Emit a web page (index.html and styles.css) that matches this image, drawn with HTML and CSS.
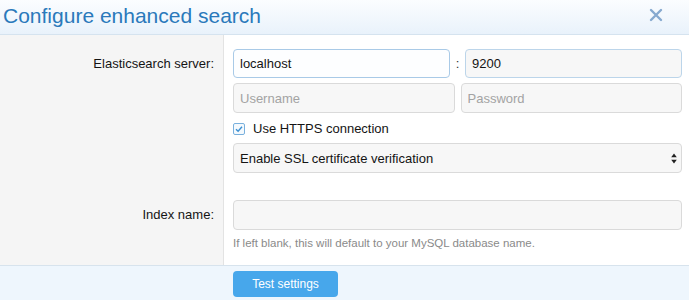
FILE: index.html
```html
<!DOCTYPE html>
<html>
<head>
<meta charset="utf-8">
<link rel="stylesheet" href="styles.css">
</head>
<body>
<div class="overlay">
  <div class="header">
    <h1 class="title">Configure enhanced search</h1>
    <span class="close">
      <svg width="14" height="14" viewBox="0 0 14 14"><path d="M2 2 L12 12 M12 2 L2 12" stroke="#86a9cf" stroke-width="2.4" stroke-linecap="round"/></svg>
    </span>
  </div>
  <div class="form">
    <div class="row row-server">
      <div class="label">Elasticsearch server:</div>
      <div class="ctrl">
        <div class="pair host">
          <input class="input focus" type="text" value="localhost">
          <span class="colon">:</span>
          <input class="input port" type="text" value="9200">
        </div>
        <div class="pair creds">
          <input class="input" type="text" placeholder="Username">
          <input class="input" type="password" placeholder="Password">
        </div>
        <label class="check">
          <span class="box"><svg width="12" height="12" viewBox="0 0 12 12"><rect x="0.5" y="0.5" width="11" height="11" rx="1.5" fill="#f4f9fd" stroke="#79b0dd"/><path d="M3 6.2 L5.1 8.2 L9 3.8" fill="none" stroke="#3b8fd2" stroke-width="1.4"/></svg></span>
          <span>Use HTTPS connection</span>
        </label>
        <div class="select">
          <span>Enable SSL certificate verification</span>
          <svg class="arrows" width="6" height="11" viewBox="0 0 6 11"><path d="M3 0.5 L5.8 4.3 L0.2 4.3 Z M3 10.5 L5.8 6.7 L0.2 6.7 Z" fill="#222"/></svg>
        </div>
      </div>
    </div>
    <div class="row row-index">
      <div class="label">Index name:</div>
      <div class="ctrl">
        <input class="input single" type="text">
        <div class="hint">If left blank, this will default to your MySQL database name.</div>
      </div>
    </div>
  </div>
  <div class="footer">
    <div class="spacer"></div>
    <div class="actions"><button class="btn">Test settings</button></div>
  </div>
</div>
</body>
</html>
```
FILE: styles.css
```css
* { box-sizing: border-box; }
html, body { margin: 0; padding: 0; }
body {
  width: 689px;
  height: 300px;
  overflow: hidden;
  font-family: "Liberation Sans", Arial, sans-serif;
  font-size: 13px;
  color: #141414;
  background: #fff;
}
.overlay { display: flex; flex-direction: column; height: 300px; }
.header {
  height: 35px;
  flex: none;
  display: flex;
  align-items: center;
  justify-content: space-between;
  padding: 0 26px 0 3px;
  background: linear-gradient(to bottom, #fbfdff 0%, #e9f2fb 100%);
  border-bottom: 1px solid #d5e3ef;
}
.title {
  margin: 0;
  font-weight: normal;
  font-size: 21px;
  color: #2a79bb;
  line-height: 30px;
  padding-bottom: 2px;
}
.close { display: flex; padding-bottom: 4px; }
.form { display: flex; flex-direction: column; height: 230px; flex: none; }
.row { display: flex; }
.label {
  width: 224px;
  flex: none;
  background: #f5f5f5;
  border-right: 1px solid #e3e3e3;
  text-align: right;
  padding-right: 9px;
  padding-top: 14px;
  line-height: 30px;
}
.ctrl {
  flex: 1;
  padding: 14px 7px 12px 9px;
  display: flex;
  flex-direction: column;
}
.row-index { flex: 1; }
.row-index .ctrl { padding-top: 15px; }
.row-index .label { padding-top: 15px; }
.pair { display: flex; }
.host { margin-bottom: 5px; }
.host .input { height: 29px; }
.creds { gap: 6px; }
.input {
  flex: 1;
  min-width: 0;
  height: 30px;
  border: 1px solid #dadada;
  border-radius: 4px;
  background: #f7f7f7;
  font-family: "Liberation Sans", Arial, sans-serif;
  font-size: 13px;
  color: #141414;
  padding: 0 6px;
  outline: none;
}
.input.single { flex: none; width: 100%; height: 30px; }
.input::placeholder { color: #a3a3a3; }
.input.focus { background: #fdfeff; border-color: #a9cae7; }
.input.port { border-color: #bcd5ea; }
.colon { width: 15px; text-align: center; line-height: 29px; color: #333; }
.check {
  display: flex;
  align-items: center;
  height: 23px;
  margin-top: 4px;
  margin-bottom: 3px;
}
.box { display: flex; width: 20px; }
.select {
  position: relative;
  height: 30px;
  flex: none;
  border: 1px solid #dadada;
  border-radius: 4px;
  background: #f7f7f7;
  display: flex;
  align-items: center;
  padding: 0 6px;
}
.arrows { position: absolute; right: 4px; top: 9px; }
.hint { margin-top: 7px; font-size: 11.5px; color: #8a8a8a; }
.footer {
  flex: 1;
  display: flex;
  background: #eef6fd;
  border-top: 1px solid #d7e3ed;
}
.spacer { width: 233px; flex: none; }
.actions { padding-top: 5px; }
.btn {
  width: 105px;
  height: 26px;
  border: none;
  border-radius: 4px;
  background: #47a7eb;
  color: #fff;
  font-family: "Liberation Sans", Arial, sans-serif;
  font-size: 12px;
  padding: 0;
}
```
